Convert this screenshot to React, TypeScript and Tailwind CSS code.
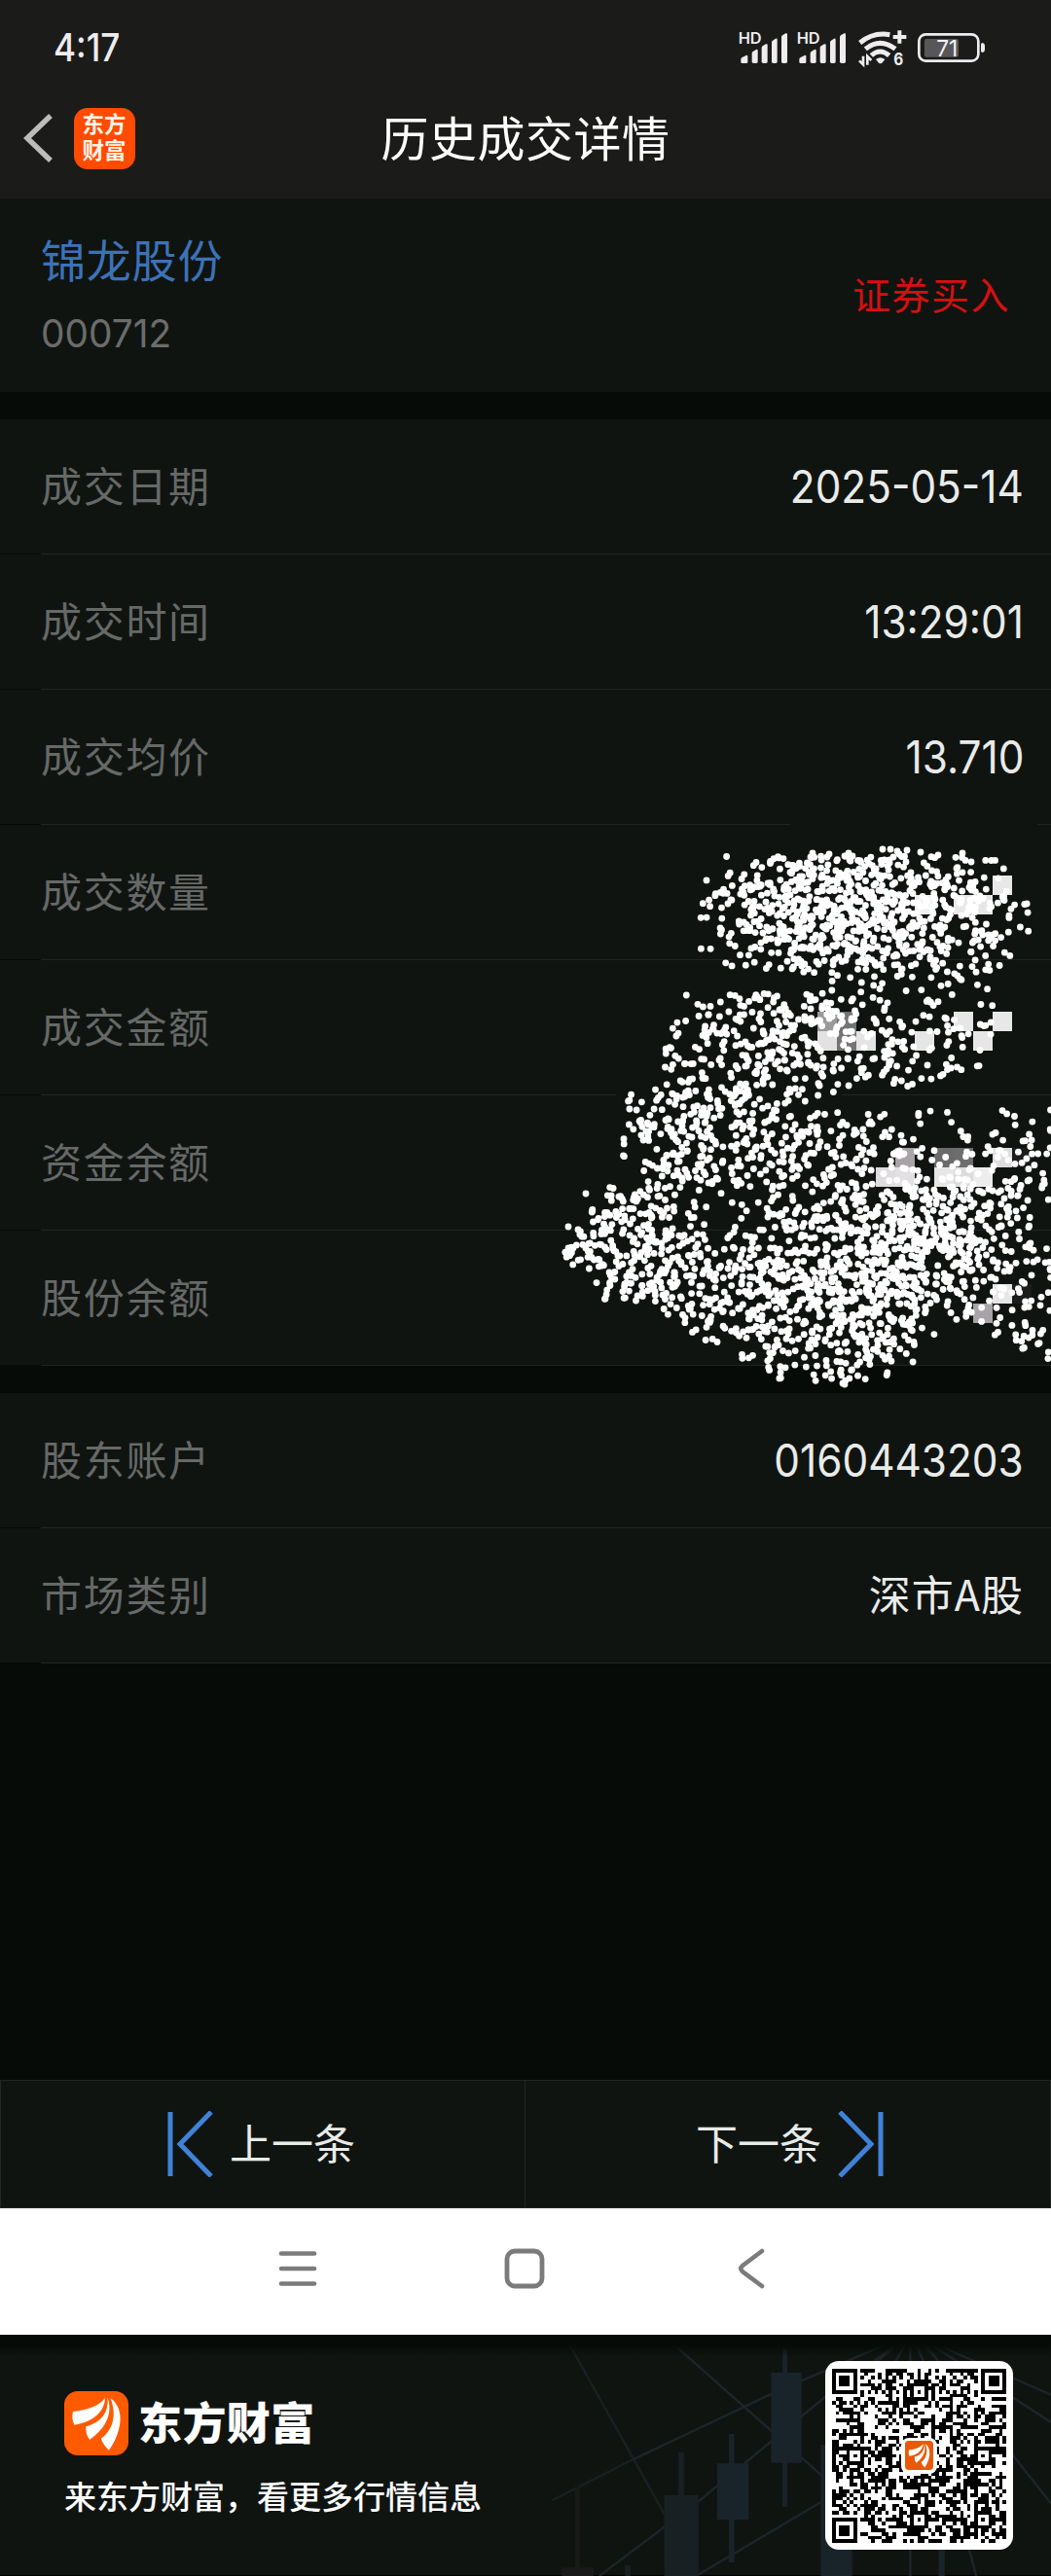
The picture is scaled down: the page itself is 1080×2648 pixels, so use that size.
import React from 'react';
import clsx from 'clsx';

interface Field {
  label: string;
  value?: string;
  cjk?: boolean;
}

const TRADE: Field[] = [
  { label: '成交日期', value: '2025-05-14' },
  { label: '成交时间', value: '13:29:01' },
  { label: '成交均价', value: '13.710' },
  { label: '成交数量' },
  { label: '成交金额' },
  { label: '资金余额' },
  { label: '股份余额' },
];

const ACCOUNT: Field[] = [
  { label: '股东账户', value: '0160443203' },
  { label: '市场类别', value: '深市A股', cjk: true },
];

const CELL = 20;

// spray density, one digit per 20px cell
const SPRAY = [
  '00000000000000000000000000',
  '00000000000000000000000000',
  '00000000012356456532141100',
  '00000000136557778754552100',
  '00000000225587788876456320',
  '00000000135479789854523210',
  '00000000121466787465424200',
  '00000000012134325333313100',
  '00000000000000112121121000',
  '00000001123434421202101000',
  '00000011433344451222212000',
  '00000031343553242331221000',
  '00000032224554223411211000',
  '00000012224321312221100000',
  '00002235555221100000000000',
  '00003435434422122102100111',
  '00002343424334333220021122',
  '00001253433353233232221322',
  '00000244432242423132241132',
  '00044421011211243455544421',
  '00364532101254434775543420',
  '03444544122234446688874330',
  '05554454225544457767763323',
  '00246653544556666686643312',
  '00034542344648887675331321',
  '00000024525443466653131121',
  '00000001234434455641000232',
  '00000000002423235420000012',
  '00000000000132242100000000',
];

const STRAYS: [number, number][] = [
  [347, 33], [355, 33], [362, 35], [372, 34], [386, 36], [404, 39], [429, 37], [438, 46],
  [275, 37], [273, 41], [292, 38], [290, 41], [312, 37], [316, 40], [308, 40], [364, 38],
  [358, 41], [308, 583], [306, 582], [24, 421], [24, 443], [29, 443], [34, 424], [42, 387],
];

// [column, row, colour] of the mosaic tiles under the spray
const TILES: [number, number, string][] = [
  [23, 3, '#e8e8e8'], [19, 4, '#f0f0f0'], [21, 4, '#e8e8e8'], [22, 4, '#e6e6e6'],
  [14, 10, '#9a9a9a'], [15, 10, '#747474'], [14, 11, '#e2e2e2'], [15, 11, '#747474'],
  [16, 11, '#e4e4e4'], [19, 11, '#e6e6e6'], [21, 10, '#e6e6e6'], [23, 10, '#e8e8e8'], [22, 11, '#e6e6e6'],
  [18, 17, '#a7a3a7'], [17, 18, '#dedcde'], [18, 18, '#e2e0e2'], [20, 17, '#6a6b6a'], [21, 17, '#6e6c6e'],
  [23, 17, '#e0dde0'], [24, 17, '#1a1b1b'], [20, 18, '#e6e6e6'], [21, 18, '#dcdcdc'], [22, 18, '#ededed'],
  [23, 24, '#e6e6e6'], [24, 24, '#1b1c1c'], [22, 25, '#a7a3a7'],
];

function random(seed: number) {
  let s = seed;
  return () => {
    s = (s * 1664525 + 1013904223) % 4294967296;
    return s / 4294967296;
  };
}

const dots = (() => {
  const rnd = random(712);
  const out: [number, number][] = [...STRAYS];
  SPRAY.forEach((row, r) => {
    for (let c = 0; c < row.length; c++) {
      const n = Math.round(Number(row[c]) * 2);
      for (let i = 0; i < n; i++) out.push([(c + rnd()) * CELL, (r + rnd()) * CELL]);
    }
  });
  return out;
})();

const Redaction = () => (
  <svg className="absolute left-[560px] top-[840px]" width="520" height="600" viewBox="0 0 520 600">
    <path d="M252 6h254v3H252zM192 145h113v3H192zM73 284h232v3H73z" fill="#101411" />
    {TILES.map(([c, r, fill]) => (
      <rect key={`${c}-${r}`} x={c * CELL} y={r * CELL} width={CELL} height={CELL} fill={fill} />
    ))}
    {dots.map(([x, y], i) => <circle key={i} cx={x.toFixed(1)} cy={y.toFixed(1)} r="3.4" fill="#fff" />)}
  </svg>
);

const QR_SIZE = 49;
const ALIGN = [[24, 6], [6, 24], [42, 24], [24, 42], [42, 42]];

const qrPath = (() => {
  const rnd = random(20250514);
  let d = '';
  for (let y = 0; y < QR_SIZE; y++) {
    for (let x = 0; x < QR_SIZE; x++) {
      let on = rnd() < 0.51;
      if (x === 6 || y === 6) on = (x + y) % 2 === 0;
      for (const [ax, ay] of ALIGN) {
        const k = Math.max(Math.abs(x - ax), Math.abs(y - ay));
        if (k <= 2) on = k !== 1;
      }
      for (const [fx, fy] of [[3, 3], [45, 3], [3, 45]]) {
        const k = Math.max(Math.abs(x - fx), Math.abs(y - fy));
        if (k <= 4) on = k !== 2 && k !== 4;
      }
      if (on) d += `M${x} ${y}h1v1h-1z`;
    }
  }
  return d;
})();

const Feathers = () => (
  <g fill="#fff">
    <path d="M218 267C262 262 296 250 314 225C314 262 284 298 222 308Q213 289 218 267Z" />
    <path d="M321 223C336 262 326 312 268 354Q255 336 257 313C303 301 326 268 321 223Z" />
    <path d="M330 226C354 240 362 276 359 300C355 335 341 364 326 386Q309 371 302 350C338 326 350 275 330 226Z" />
  </g>
);

const QrCode = () => (
  <div className="relative flex h-[194px] w-[193px] shrink-0 items-center justify-center rounded-[14px] bg-white">
    <svg width="179" height="179" viewBox="0 0 49 49" shapeRendering="crispEdges">
      <path d={qrPath} fill="#000" />
    </svg>
    <div className="absolute flex size-[37px] items-center justify-center rounded-lg bg-white">
      <svg className="rounded-[4px] bg-[#e95a08]" width="29" height="30" viewBox="192 204 192 198"><Feathers /></svg>
    </div>
  </div>
);

const Bars = ({ x }: { x: number }) => (
  <g transform={`translate(${x} 0)`} fill="#efecef">
    <text x="-8" y="105" fontSize="48" fontWeight="600" textLength="72" lengthAdjust="spacingAndGlyphs">HD</text>
    <path d="M0 161v-8q0-4 4-6l12-6q5-2 5 3v17q0 4-4 4h-13q-4 0-4-4z" />
    <path d="M34 160v-26q0-3 3-5l10-6q5-2 5 3v34q0 5-5 5h-8q-5 0-5-5z" />
    <path d="M64 160v-43q0-3 3-5l10-6q5-2 5 3v51q0 5-5 5h-8q-5 0-5-5z" />
    <path d="M95 160v-60q0-3 3-5l9-6q5-2 5 3v68q0 5-5 5h-7q-5 0-5-5z" />
    <path d="M125 160v-76q0-3 3-5l10-6q5-2 5 3v84q0 5-5 5h-8q-5 0-5-5z" />
  </g>
);

const StatusIcons = () => (
  <svg className="font-['Inter',sans-serif]" width="290" height="80" viewBox="0 0 870 240">
    <Bars x={64} />
    <Bars x={244} />
    <g fill="none" stroke="#efecef" strokeWidth="15">
      <path d="M431 102Q472 68 523 77" />
      <path d="M448 121Q493 85 540 121" />
      <path d="M466 141Q493 117 521 141" />
      <path d="M533 84h41M553 64v40" strokeWidth="12" />
      <path d="M441 143v26l-12-12M454 170v-26l12 12" strokeWidth="8" />
    </g>
    <path d="M480 153Q494 142 508 153L499 164Q494 168 489 164Z" fill="#efecef" />
    <text x="535" y="171" fontSize="50" fontWeight="700" fill="#efecef" textLength="30" lengthAdjust="spacingAndGlyphs">6</text>
    <rect x="630" y="90" width="105" height="56" rx="6" fill="#575757" />
    <rect x="613" y="76" width="183" height="82" rx="21" fill="none" stroke="#efecef" strokeWidth="8" />
    <path d="M804 107q0-5 5-5q7 2 7 9v12q0 7-7 9q-5 0-5-5z" fill="#efecef" />
    <text x="667" y="143" fontSize="70" fill="#f4f2f4" textLength="66" lengthAdjust="spacingAndGlyphs">71</text>
  </svg>
);

const Row: React.FC<Field> = ({ label, value, cjk }) => (
  <div className="h-[139px] bg-[#060b07]">
    <div className="flex h-[138px] items-center justify-between bg-[#101411] pr-[28px] pl-[42px]">
      <span className="pb-[5px] text-[42px] tracking-[1.7px] text-[#666967]">{label}</span>
      {value && (
        <span
          className={clsx(
            'text-[#e9ebe9]',
            cjk
              ? 'pb-[5px] text-[43px] tracking-[1px]'
              : "origin-right scale-x-[.92] font-['Inter',sans-serif] text-[46px]",
          )}
        >
          {value}
        </span>
      )}
    </div>
    <div className="ml-[42px] h-px bg-[#202422]" />
  </div>
);

const FooterPattern = () => (
  <svg className="absolute top-0 right-0" width="540" height="248" viewBox="0 30 1568 744" preserveAspectRatio="none">
    <g fill="none" stroke="#1d252a" strokeWidth="7">
      <path d="M115 30L418 590M80 540L320 415" strokeOpacity=".7" />
      <path d="M410 30L890 470M320 415L735 212L1130 35M220 774L515 545L890 225L1140 35M515 770L900 535" />
      <path d="M1145 30L1040 120M1150 30L1100 120M1148 30V774M1155 30L1190 120M1160 30L1240 120M1160 30L1568 215M1165 30L1568 300M1170 30L1568 550M1300 600L1345 774" />
    </g>
    <g fill="#19242a">
      <path d="M733 147h91v278h-91zM767 73h14v487h-14z" />
      <path d="M572 427h94v173h-94zM607 336h16v396h-16z" />
      <path d="M881 370h94v404h-94zM1233 690h18v84h-18z" />
    </g>
    <path d="M414 525h102v249H414zM456 393h17v132h-17zM297 740h16v34h-16z" fill="#192024" />
    <path d="M108 748h96v26h-96zM148 497h14v251h-14z" fill="#181918" />
  </svg>
);

export default function App() {
  return (
    <div className="relative flex h-[2648px] w-[1080px] flex-col overflow-hidden bg-[#060b07] font-['Noto_Sans_CJK_SC',sans-serif] leading-none">
      <header className="h-[204px] bg-[#1b1c1a]">
        <div className="flex h-[100px] justify-between pr-[50px] pl-[55px]">
          <span className="origin-left scale-x-90 pt-[29px] font-['Inter',sans-serif] text-[39px] font-medium text-[#efecef]">4:17</span>
          <div className="pt-[10px]"><StatusIcons /></div>
        </div>
        <div className="grid h-[84px] grid-cols-[1fr_auto_1fr] items-center">
          <div className="flex items-center pl-[22px]">
            <svg width="34" height="54" viewBox="0 0 34 54" fill="none" stroke="#bcbcbc" strokeWidth="5.5">
              <path d="M30 4L6 27L30 50" />
            </svg>
            <div className="ml-[20px] flex h-[63px] w-[63px] justify-center rounded-[14px] bg-[#ff4b00] pt-[2px] text-[22.5px] leading-[27px] font-bold text-[#fff4e8]">
              <span className="w-[46px] break-all">东方财富</span>
            </div>
          </div>
          <h1 className="pb-[6px] text-[49px] tracking-[0.5px] text-white">历史成交详情</h1>
        </div>
      </header>

      <section className="flex h-[199px] items-center justify-between bg-[#101411] pr-[42px] pb-[2px] pl-[42px]">
        <div className="flex flex-col">
          <span className="text-[46px] tracking-[0.8px] text-[#3c72b8]">锦龙股份</span>
          <span className="mt-[35px] origin-left scale-x-[.97] font-['Inter',sans-serif] text-[40px] text-[#6b6c6b]">000712</span>
        </div>
        <span className="pb-[2px] text-[39px] tracking-[1.5px] text-[#d41010]">证券买入</span>
      </section>

      <section className="mt-[28px]">
        {TRADE.map((f) => <Row key={f.label} {...f} />)}
      </section>
      <section className="mt-[28px]">
        {ACCOUNT.map((f) => <Row key={f.label} {...f} />)}
      </section>

      <Redaction />

      <div className="mt-auto grid h-[132px] shrink-0 grid-cols-2 border border-[#222624] bg-[#101411] text-[43px] text-[#e9ebe9]">
        <button className="flex items-center border-r border-[#222624] pl-[170px]">
          <svg width="48" height="68" viewBox="0 0 48 68" fill="none" stroke="#3f82d8" strokeWidth="5">
            <path d="M4 1V67M46 1L14 34L46 67" />
          </svg>
          <span className="ml-[17px] pb-[5px]">上一条</span>
        </button>
        <button className="flex items-center justify-end pr-[170px]">
          <span className="mr-[17px] pb-[5px]">下一条</span>
          <svg width="48" height="68" viewBox="0 0 48 68" fill="none" stroke="#3f82d8" strokeWidth="5">
            <path d="M44 1V67M2 1L34 34L2 67" />
          </svg>
        </button>
      </div>

      <nav className="flex h-[130px] shrink-0 items-center bg-white pb-[7px] pl-[284px]">
        <svg width="44" height="44" viewBox="0 0 44 44" fill="none" stroke="#7b7b7b" strokeWidth="4.6" strokeLinecap="round">
          <path d="M5 6.5H39M5 22H39M5 37.5H39" />
        </svg>
        <svg className="ml-[189px]" width="44" height="44" viewBox="0 0 44 44" fill="none" stroke="#7b7b7b" strokeWidth="4.8">
          <rect x="4" y="4" width="36" height="36" rx="8" />
        </svg>
        <svg className="ml-[192px]" width="34" height="44" viewBox="0 0 34 44" fill="none" stroke="#7b7b7b" strokeWidth="4.6" strokeLinecap="round">
          <path d="M30 4L10 19Q6.500 22 10 25L30 40" />
        </svg>
      </nav>

      <footer className="relative flex h-[248px] shrink-0 justify-between border-b border-black bg-[#101411] pt-[27px] pr-[39px] pl-[66px]">
        <FooterPattern />
        <div className="absolute inset-x-0 top-0 h-[22px] bg-linear-to-b from-[#060b07] from-50% to-transparent" />
        <div className="relative pt-[31px] text-white">
          <div className="flex items-center">
            <svg className="rounded-[14px] bg-[#ff5a00]" width="66" height="66" viewBox="192 204 192 198" preserveAspectRatio="none"><Feathers /></svg>
            <span className="ml-[10px] pb-[5px] text-[45px] font-black tracking-[0.4px]">东方财富</span>
          </div>
          <p className="mt-[25px] text-[33px] font-medium">来东方财富，看更多行情信息</p>
        </div>
        <QrCode />
      </footer>
    </div>
  );
}
